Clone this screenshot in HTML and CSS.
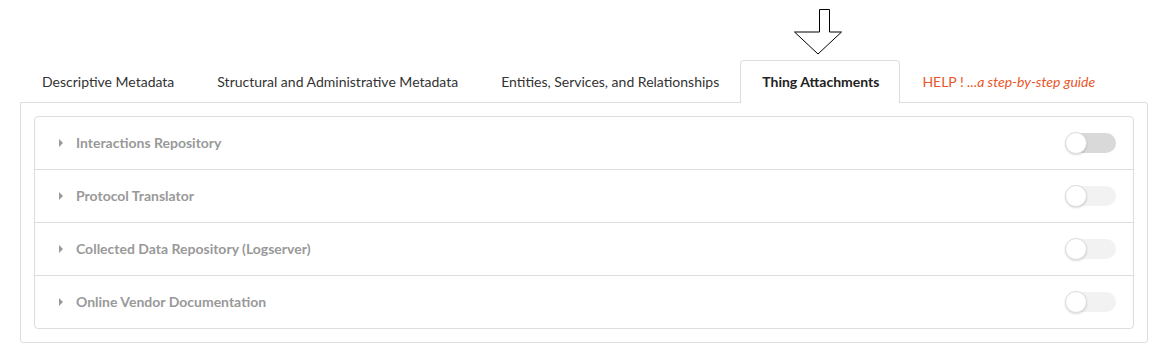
FILE: index.html
```html
<!DOCTYPE html>
<html lang="en">
<head>
    <meta charset="UTF-8">
    <title>Thing Attachments</title>
    <link rel="stylesheet" href="styles.css">
</head>
<body>
    <div class="page">
        <!-- pointer arrow above the active tab -->
        <svg class="pointer" width="50" height="48" viewBox="0 0 50 48">
            <path d="M25.5 0.5 H35.5 V23 H47.5 L24 45 L0.5 23 H25.5 Z" fill="#fff" stroke="#000" stroke-width="1"/>
        </svg>

        <ul class="tabs">
            <li class="tab">Descriptive Metadata</li>
            <li class="tab">Structural and Administrative Metadata</li>
            <li class="tab">Entities, Services, and Relationships</li>
            <li class="tab active">Thing Attachments</li>
            <li class="tab help">HELP ! <em>...a step-by-step guide</em></li>
        </ul>

        <div class="panel">
            <div class="card">
                <div class="row">
                    <span class="caret"></span>
                    <span class="label">Interactions Repository</span>
                    <span class="switch hover"><span class="knob"></span></span>
                </div>
                <div class="row">
                    <span class="caret"></span>
                    <span class="label">Protocol Translator</span>
                    <span class="switch"><span class="knob"></span></span>
                </div>
                <div class="row">
                    <span class="caret"></span>
                    <span class="label">Collected Data Repository (Logserver)</span>
                    <span class="switch"><span class="knob"></span></span>
                </div>
                <div class="row">
                    <span class="caret"></span>
                    <span class="label">Online Vendor Documentation</span>
                    <span class="switch"><span class="knob"></span></span>
                </div>
            </div>
        </div>
    </div>
</body>
</html>
```

FILE: styles.css
```css
body {
    margin: 0;
    font-family: Lato, "Open Sans", sans-serif;
    background: white;
    color: #333;
}

.page {
    position: relative;
    padding: 60px 19px 0 20px;
}

.pointer {
    position: absolute;
    left: 794px;
    top: 9px;
}

.tabs {
    display: flex;
    list-style: none;
    margin: 0 0 -1px 0;
    padding: 0;
    position: relative;
    z-index: 1;
}

.tab {
    font-size: 14px;
    line-height: 20px;
    padding: 11px 20px 11px 21px;
    border: 1px solid transparent;
    border-bottom: none;
    color: #333;
}

.tab.active {
    background: white;
    border-color: #ddd;
    border-radius: 4px 4px 0 0;
    font-weight: bold;
    color: #222;
}

.tab.help {
    color: #e8562a;
}

.panel {
    border: 1px solid #ddd;
    border-radius: 0 3px 3px 3px;
    padding: 13px;
}

.card {
    border: 1px solid #ddd;
    border-radius: 4px;
}

.row {
    display: flex;
    align-items: center;
    height: 52px;
    padding: 0 17px 0 24px;
    border-top: 1px solid #ddd;
}

.row:first-child {
    border-top: none;
}

.caret {
    width: 0;
    height: 0;
    border-top: 4px solid transparent;
    border-bottom: 4px solid transparent;
    border-left: 4px solid #999;
    margin-right: 13px;
}

.label {
    flex: 1;
    font-size: 14px;
    font-weight: bold;
    color: #999;
    padding-bottom: 1px;
}

.switch {
    position: relative;
    width: 50px;
    height: 20px;
    border-radius: 10px;
    background: #f2f2f2;
}

.switch.hover {
    background: #d9d9d9;
}

.knob {
    position: absolute;
    left: -1px;
    top: -1px;
    width: 20px;
    height: 20px;
    border-radius: 50%;
    background: #fff;
    border: 1px solid #ddd;
    box-shadow: 0 1px 2px rgba(0,0,0,0.15);
}
```
